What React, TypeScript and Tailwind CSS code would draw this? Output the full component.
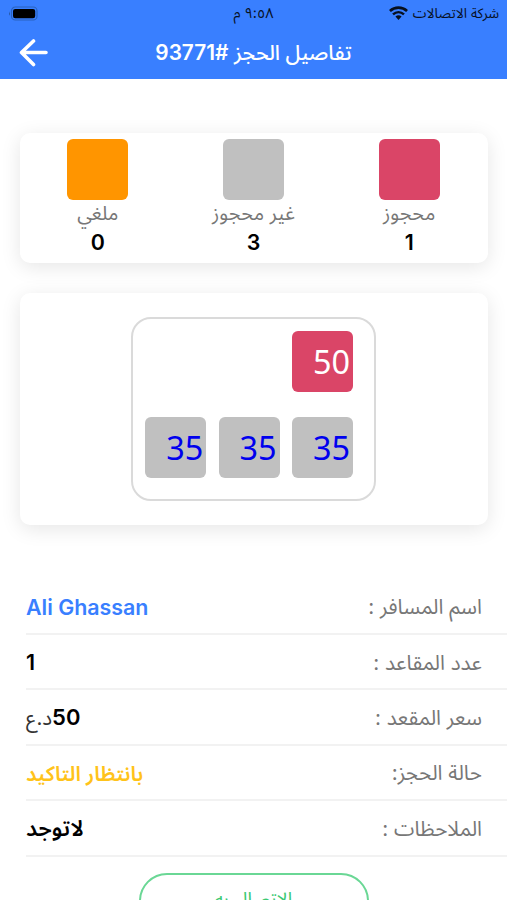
import { type ReactNode } from 'react'
import clsx from 'clsx'

interface LegendItem {
  label: string
  count: number
  color: string
}

const LEGEND: LegendItem[] = [
  { label: 'محجوز', count: 1, color: 'bg-[#da4567]' },
  { label: 'غير محجوز', count: 3, color: 'bg-[#c0c0c0]' },
  { label: 'ملغي', count: 0, color: 'bg-[#ff9500]' },
]

function WifiIcon() {
  return (
    <svg className="h-[15px] w-[19px]" viewBox="0 0 18 14" fill="none" stroke="#07101f">
      <path d="M.9 4.6C5.5.4 12.5.4 17.1 4.6" strokeWidth={2.5} />
      <path d="M3.8 7.9C6.9 5 11.1 5 14.2 7.9" strokeWidth={2.3} />
      <path d="M6.1 9.9Q9 7.5 11.9 9.9L9 13.1Z" fill="#07101f" stroke="none" />
    </svg>
  )
}

function BatteryIcon() {
  return (
    <svg className="h-[15px] w-[30px]" viewBox="0 0 30 15" fill="none">
      <rect x="3.5" y="1" width="25.5" height="13" rx="3.8" stroke="#2a63bd" strokeWidth={1.2} />
      <rect x="5" y="2.9" width="22.2" height="9.4" rx="2.2" fill="#000" />
      <path d="M2 5.2Q.3 7.5 2 9.8Z" fill="#24559f" />
    </svg>
  )
}

function StatusBar() {
  return (
    <div className="grid h-[26px] grid-cols-3 items-center px-2 text-[13.8px] text-[#07101f]">
      <div className="flex items-center gap-[5px] whitespace-nowrap">
        <span>شركة الاتصالات</span>
        <WifiIcon />
      </div>
      <div className="text-center text-[14.5px]">٩:٥٨ م</div>
      <div className="flex justify-end">
        <BatteryIcon />
      </div>
    </div>
  )
}

function Header() {
  return (
    <header className="h-[79px] bg-[#397fff]">
      <StatusBar />
      <div className="grid h-[53px] grid-cols-[48px_1fr_48px] items-center px-[18px] text-white">
        <span />
        <h1 className="pt-px text-center text-[20.8px] font-medium whitespace-nowrap">
          تفاصيل الحجز <span className="font-semibold">#93771</span>
        </h1>
        <button className="flex justify-end" aria-label="رجوع">
          <svg
            className="h-[28px] w-[30px]"
            viewBox="0 0 30 28"
            fill="none"
            stroke="currentColor"
            strokeWidth={3.6}
            strokeLinecap="round"
            strokeLinejoin="round"
          >
            <path d="M15.5 2L3.5 13.5 15.5 25.5M3.5 13.5H28" />
          </svg>
        </button>
      </div>
    </header>
  )
}

function Card({ children, className }: { children: ReactNode; className?: string }) {
  return (
    <section
      className={clsx(
        'mr-[19px] ml-[20px] rounded-[10px] bg-white pr-px shadow-[0_4px_20px_rgba(0,0,0,0.1)]',
        className
      )}
    >
      {children}
    </section>
  )
}

function Seat({ price, booked }: { price: number; booked?: boolean }) {
  return (
    <div
      className={clsx(
        'flex h-[61px] w-[61px] items-center justify-end rounded-[6px] pr-[3px] text-[32.4px]',
        booked ? 'bg-[#da4567] text-white' : 'bg-[#c0c0c0] text-[#0000ee]'
      )}
      dir="ltr"
    >
      <span className="font-['Noto_Sans',sans-serif]">{price}</span>
    </div>
  )
}

function Row({ label, children }: { label: string; children: ReactNode }) {
  return (
    <div className="ml-[26px] flex h-[55.4px] items-center justify-between border-b-2 border-[#f2f2f2] pt-px pr-[25px]">
      <span className="text-[20.7px] text-[#777]">{label}</span>
      <span className="text-[21.4px] font-semibold text-black">{children}</span>
    </div>
  )
}

export default function App() {
  return (
    <div
      dir="rtl"
      className="h-[900px] w-[507px] overflow-hidden bg-white font-[Inter,'Noto_Sans_Arabic','DejaVu_Sans',sans-serif]"
    >
      <Header />

      <Card className="mt-[54px] grid h-[130px] grid-cols-3 pt-[6px]">
        {LEGEND.map((item) => (
          <div key={item.label} className="flex flex-col items-center">
            <div className={clsx('h-[61px] w-[61px] rounded-[6px]', item.color)} />
            <span className="h-[27px] text-[19.8px] leading-[27px] whitespace-nowrap text-[#777]">{item.label}</span>
            <span className="text-[21.4px] leading-[30px] font-semibold text-black">{item.count}</span>
          </div>
        ))}
      </Card>

      {/* 좌석 배치 */}
      <Card className="mt-[30px] flex h-[232px] justify-center pt-[24px]">
        <div className="flex h-[184px] w-[245px] flex-col gap-[25px] rounded-[20px] border-2 border-[#dadada] pt-[12px] pr-[21px]">
          <div className="flex">
            <Seat price={50} booked />
          </div>
          <div className="flex gap-[12.4px]">
            <Seat price={35} />
            <Seat price={35} />
            <Seat price={35} />
          </div>
        </div>
      </Card>

      <div className="mt-[54.6px]">
        <Row label="اسم المسافر :">
          <span className="text-[#397fff]">Ali Ghassan</span>
        </Row>
        <Row label="عدد المقاعد :">1</Row>
        <Row label="سعر المقعد :">
          <span className="text-[22px]">50</span>
          <span className="text-[20.5px] font-normal text-[#333]">د.ع</span>
        </Row>
        <Row label="حالة الحجز:">
          <span className="text-[20.8px] text-[#ffc31a]">بانتظار التاكيد</span>
        </Row>
        <Row label="الملاحظات :">
          <span className="text-[22px]">لاتوجد</span>
        </Row>
      </div>

      <div className="mt-[16px] flex justify-center">
        <button className="h-[56px] w-[230px] rounded-[28px] border-2 border-[#6ad795] text-[19px] text-[#3cc973]">
          الاتصال به
        </button>
      </div>
    </div>
  )
}
